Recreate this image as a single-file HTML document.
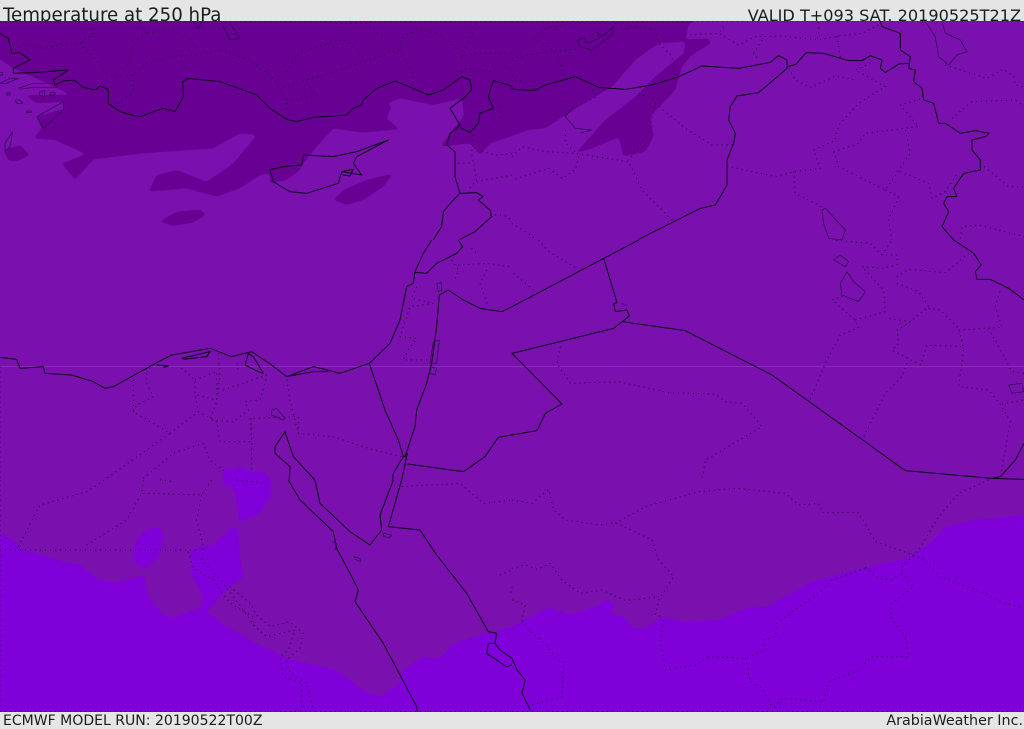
<!DOCTYPE html>
<html><head><meta charset="utf-8">
<style>
html,body{margin:0;padding:0;background:#e5e5e5}
body{position:relative;width:1024px;height:729px;overflow:hidden;font-family:"DejaVu Sans",sans-serif;color:#1c1c1c}
.t{position:absolute;white-space:nowrap;line-height:1}
svg{position:absolute;left:0;top:21px}
polyline{fill:none;stroke-linejoin:round;vector-effect:non-scaling-stroke}
.s polyline{stroke:#0c0418;stroke-width:1}
.l polyline{stroke:#2a0a4a;stroke-width:.7}
.d polyline{stroke:#14042a;stroke-width:1;stroke-dasharray:1 4}
</style></head><body>
<div class="t" style="left:3px;top:7px;font-size:18.2px">Temperature at 250 hPa</div>
<div class="t" style="right:3px;top:8px;font-size:16.13px">VALID T+093 SAT. 20190525T21Z</div>
<div class="t" style="left:3px;top:714px;font-size:14.04px">ECMWF MODEL RUN: 20190522T00Z</div>
<div class="t" style="right:1px;top:714px;font-size:14.3px">ArabiaWeather Inc.</div>
<svg width="1024" height="691" viewBox="0 21 1024 691">
<defs>
<filter id="sm" x="-5%" y="-5%" width="110%" height="110%" color-interpolation-filters="sRGB">
<feGaussianBlur stdDeviation="5"/>
<feComponentTransfer><feFuncA type="linear" slope="6" intercept="-2.5"/></feComponentTransfer>
</filter>
</defs>
<rect x="0" y="21" width="1024" height="691" fill="#7a11ae"/>
<g transform="scale(.33333)">
<g filter="url(#sm)" fill="#690094">
<polygon points="-40,10 2092,10 2081,63 2066,75 2056,118 2126,115 2133,130 2076,165 2046,200 2026,270 1951,350 1961,410 1936,455 1871,470 1856,412 1776,445 1726,460 1816,360 1906,290 1966,230 2051,160 2056,125 1976,130 1906,180 1836,260 1736,320 1636,385 1586,390 1536,408 1470,430 1440,465 1410,430 1320,440 1370,375 1392,345 1385,295 1300,315 1200,295 1160,310 1175,320 1160,355 1200,388 1085,398 1000,385 950,440 910,490 900,510 860,540 810,550 808,520 780,525 720,565 650,590 560,565 445,575 470,525 530,510 620,545 700,490 770,405 720,400 640,445 430,460 280,478 225,540 185,490 258,462 165,420 100,415 125,385 110,350 195,325 190,305 110,310 75,285 215,285 130,245 40,205 0,178 -40,160"/>
<polygon points="10,450 60,435 90,465 50,485 25,482"/>
<polygon points="1000,600 1030,570 1100,540 1180,520 1150,560 1090,600 1040,615"/>
<polygon points="478,665 530,635 600,628 618,645 580,668 520,678"/>
</g>
</g>
<g transform="translate(512,240) scale(.33333)">
<polygon fill="#690094" points="325,187 345,193 345,200 328,193"/>
</g>
<g transform="translate(0,480) scale(.33333)">
<g filter="url(#sm)" fill="#7f00d8">
<polygon points="670,-40 690,-30 720,-40 750,-25 790,-25 812,-5 812,50 780,100 718,127 705,30 670,15"/>
<polygon points="400,200 430,155 470,140 490,155 480,230 430,268 400,240"/>
<polygon points="-40,145 0,160 40,180 60,205 130,225 190,245 240,255 300,300 350,307 430,285 445,350 490,405 520,412 600,385 610,350 575,285 570,215 600,200 640,195 700,140 715,150 720,230 730,290 690,320 620,395 680,440 770,490 860,535 1010,570 1090,630 1140,650 1200,610 1205,575 1270,530 1320,535 1360,490 1480,455 1536,440 1646,382 1711,403 1786,380 1821,358 1846,375 1828,397 1871,410 1896,443 1936,445 1986,410 2046,425 2156,420 2236,385 2306,378 2436,305 2596,263 2726,232 2796,185 2836,140 2936,118 3072,105 3120,95 3120,760 -40,760"/>
</g>
</g>
<rect x="0" y="366" width="1024" height="1" fill="#8a2cb8"/>

<!-- tile 1 -->
<g transform="scale(.33333)">
<g class="d">
<polyline points="275,70 280,100 240,130 200,130 130,145 70,130 40,160"/>
<polyline points="240,130 280,170 320,220 350,230 400,225 440,190 510,170 590,165 665,150 750,180 820,235 840,265 860,300 865,345 860,358"/>
<polyline points="420,80 440,98 510,92 570,115 600,155"/>
<polyline points="440,100 400,125 385,190 370,220"/>
<polyline points="400,225 400,275 355,310"/>
<polyline points="860,215 900,155 1030,118 1080,160 1095,185 1000,215 920,240 840,265"/>
<polyline points="1095,185 1150,165 1200,150 1205,115 1250,90 1315,100 1375,150 1385,170 1430,160 1536,160"/>
<polyline points="1145,110 1100,70 1000,70"/>
<polyline points="1200,150 1240,225 1240,250"/>
<polyline points="1385,170 1430,70"/>
<polyline points="1370,225 1400,205 1475,215"/>
<polyline points="1515,200 1536,215"/>
<polyline points="920,250 950,285 880,300 860,300"/>
<polyline points="1420,405 1415,460 1430,540 1405,570"/>
<polyline points="1375,490 1420,488"/>
<polyline points="1445,455 1490,465 1536,460"/>
<polyline points="1430,545 1536,525"/>
<polyline points="1470,645 1510,645 1536,660"/>
<polyline points="1500,320 1505,355"/>
<polyline points="0,63 1536,63"/>
</g>
<g class="s">
<polyline points="0,100 25,115 35,160 60,158 90,180 40,205 40,220 100,218 205,210 160,240 165,255 190,243 222,240 250,262 285,270 300,258 325,268 325,310 360,335 395,345 420,350 490,325 525,335 550,290 548,245 565,235 660,245 770,285 810,325 860,358 890,365 940,352 1040,345 1060,325 1085,315 1090,300 1130,265 1185,243 1220,257 1285,285 1330,270 1385,230 1410,240 1415,270 1390,295 1350,325 1380,375 1370,385 1350,400 1340,435 1365,455 1365,530 1380,580 1430,578 1450,590 1435,600 1470,630 1475,650 1425,695 1380,718"/>
<polyline points="1380,382 1410,398 1435,370 1440,340 1480,325 1465,290 1480,242 1536,258 1536,268"/>
<polyline points="1380,580 1355,605 1330,635 1325,680 1300,720"/>
<polyline points="810,510 820,545 870,575 920,580 1015,550 1025,515 1085,525 1060,490 1070,470 1165,420 1070,455 1000,470 912,465 905,495 850,500 810,510"/>
<polyline points="1025,515 1060,508 1050,528 1028,525"/>
</g>
<g class="l">
<polyline points="665,70 690,120 720,115 690,70"/>
<polyline points="580,63 595,85 605,65"/>
<polyline points="110,350 190,305 190,330 130,385 110,350"/>
<polyline points="38,395 15,430 15,455 30,440 38,395"/>
<polyline points="0,250 30,235 55,235 20,250 0,250"/>
<polyline points="55,265 100,250 165,250 170,262 100,262 60,268"/>
<polyline points="118,275 135,272 132,290 118,285 118,275"/>
<polyline points="45,300 60,300 68,310 50,310 45,300"/>
<polyline points="80,333 95,333 95,338 80,338 80,333"/>
<polyline points="20,278 30,278 30,285 20,285 20,278"/>
<polyline points="150,278 165,278 165,285 150,285 150,278"/>
<polyline points="0,218 8,218 8,225 0,225"/>
</g>
</g>

<!-- tile 2 -->
<g transform="translate(512,0) scale(.33333)">
<g class="d">
<polyline points="520,105 620,100 680,135 730,110 810,108 920,120 975,108 1050,100 1100,75"/>
<polyline points="625,95 640,70"/>
<polyline points="975,108 985,170"/>
<polyline points="920,100 920,65"/>
<polyline points="750,120 725,160 740,180"/>
<polyline points="0,175 130,150 160,235"/>
<polyline points="0,225 70,270"/>
<polyline points="65,115 100,85 180,70 310,70"/>
<polyline points="65,115 95,135 135,155 200,145"/>
<polyline points="310,70 430,90 440,130 480,170 490,225"/>
<polyline points="240,270 255,290 180,325"/>
<polyline points="380,280 430,300 410,400 350,480"/>
<polyline points="430,310 520,385 600,435 665,435"/>
<polyline points="0,470 30,440 100,455 190,460 350,485 390,570 485,665"/>
<polyline points="200,470 190,510 150,535 110,505 0,540"/>
<polyline points="160,390 160,430 190,455"/>
<polyline points="645,498 790,530 845,515 925,505 905,450 970,420 980,375 1040,310 1120,260 1030,210 1085,185"/>
<polyline points="830,205 850,240 895,262 970,228 1030,240"/>
<polyline points="845,515 850,580 910,610 935,625"/>
<polyline points="965,455 1040,430 1060,400 1220,380 1165,315 1230,295"/>
<polyline points="1180,390 1195,460 1120,570 980,500 965,455"/>
<polyline points="1165,515 1250,550 1260,595 1300,575 1340,515"/>
<polyline points="1120,570 1160,590 1130,660 1140,720"/>
<polyline points="1320,355 1380,305 1510,300 1536,320"/>
<polyline points="1405,490 1490,560 1536,560"/>
<polyline points="1300,195 1425,235 1475,208 1505,230 1510,255 1536,260"/>
<polyline points="0,670 70,715"/>
<polyline points="1345,715 1350,680 1400,675 1536,710"/>
<polyline points="0,63 1536,63"/>
</g>
<g class="s">
<polyline points="0,268 65,272 100,255 190,230 260,262 340,268 420,255 500,230 570,198 680,205 775,187 800,167 825,180 825,205"/>
<polyline points="825,200 852,193 882,158 935,160 1010,182 1050,182 1075,167 1110,180 1105,205 1120,218 1160,192 1190,190"/>
<polyline points="1105,63 1110,80 1165,100 1165,150 1195,170 1190,205 1210,210 1205,245 1230,265 1235,300 1265,310 1280,370 1300,370 1345,400 1390,392 1432,400 1420,410 1380,420 1380,450 1405,480 1405,510 1355,520 1325,565 1335,590 1305,590 1295,610 1310,635 1290,680 1325,720"/>
<polyline points="825,205 740,278 675,288 655,320 650,360 670,400 665,430 645,480 645,555 610,615 565,625 380,718"/>
</g>
<g class="l">
<polyline points="195,120 215,115 225,130 260,115 255,95 270,110 305,80 300,105 240,150 205,140 195,120"/>
<polyline points="1240,65 1270,110 1280,170 1310,195 1335,165 1365,155 1345,120 1300,100 1290,65"/>
<polyline points="930,630 940,625 1000,690 990,720 950,715 935,670 930,630"/>
<polyline points="185,320 160,350 190,385 240,390 205,400"/>
</g>
</g>

<!-- tile 3 -->
<g transform="translate(0,240) scale(.33333)">
<g class="d">
<polyline points="0,380 0,720"/>
<polyline points="400,420 400,515 510,580 320,715"/>
<polyline points="510,580 595,515 585,465 585,420 540,380"/>
<polyline points="440,385 440,430 460,470 410,495 400,515"/>
<polyline points="585,420 650,395 650,480 590,465"/>
<polyline points="655,340 660,400 650,485 630,540 700,545 745,510 735,485 780,480 800,410"/>
<polyline points="670,450 730,430 800,405"/>
<polyline points="595,515 650,545 660,605 755,605 750,535 895,530 895,580 870,480 860,415"/>
<polyline points="755,535 755,690"/>
<polyline points="895,580 1000,590 1120,630 1205,650"/>
<polyline points="430,715 520,640 610,610 630,660 680,700"/>
<polyline points="710,370 715,395"/>
<polyline points="1250,140 1235,175 1300,190 1230,200 1200,290 1250,295 1225,330 1210,360 1290,360"/>
<polyline points="1355,60 1375,90 1365,120"/>
<polyline points="1375,75 1460,70 1530,80"/>
<polyline points="1460,90 1440,130 1465,200"/>
<polyline points="1415,25 1430,40"/>
</g>
<g class="s">
<polyline points="1295,0 1270,40 1245,95 1240,130 1220,140 1200,240 1170,310 1108,370 1020,400 990,392 940,380 860,410 815,375 755,335 695,350 630,325 515,345 470,368 340,440 315,445 280,425 215,405 135,400 130,380 60,385 50,358 0,352"/>
<polyline points="1245,97 1280,100 1310,70 1370,40 1388,20 1375,0"/>
<polyline points="1318,165 1310,260 1295,370 1290,390 1280,430 1250,510 1245,560 1215,650 1210,650"/>
<polyline points="1108,370 1155,510 1195,600 1210,650"/>
<polyline points="1222,640 1205,720"/>
<polyline points="1210,650 1180,700 1178,720"/>
<polyline points="1318,165 1345,150 1390,180 1440,205 1505,215 1536,200"/>
<polyline points="1536,585 1495,592 1455,650 1390,695 1222,672"/>
<polyline points="855,575 825,620 825,640 870,680 868,720"/>
<polyline points="855,575 880,650 945,720"/>
<polyline points="735,375 745,340 760,350 790,400 775,395 735,375"/>
<polyline points="860,410 940,395 985,395"/>
<polyline points="545,355 630,335 620,350 550,358"/>
<polyline points="470,375 505,378 490,382"/>
</g>
<g class="l">
<polyline points="1300,305 1318,300 1310,370 1290,370 1300,305"/>
<polyline points="1290,380 1310,385 1305,405 1288,398 1290,380"/>
<polyline points="1310,130 1325,128 1325,150 1315,155 1310,130"/>
<polyline points="815,510 830,505 855,535 850,540 815,525 815,510"/>
</g>
</g>

<!-- tile 4 -->
<g transform="translate(512,240) scale(.33333)">
<g class="d">
<polyline points="80,0 110,35 200,88"/>
<polyline points="5,100 70,155"/>
<polyline points="145,320 135,370 175,430 320,425 470,458 610,462 640,485 690,490 750,560 580,660 570,720"/>
<polyline points="895,478 940,370 985,285 1040,262 1030,240 960,180 1000,165"/>
<polyline points="1030,240 1120,215 1115,150 1050,80 1110,85 1155,75 1155,45 1110,45 1075,10 960,0"/>
<polyline points="1110,45 1140,0"/>
<polyline points="1155,110 1190,88 1300,98 1370,40"/>
<polyline points="1155,130 1220,155 1250,200 1195,245 1125,235"/>
<polyline points="1250,205 1285,210 1340,265 1355,330 1340,440 1430,450 1470,500 1495,545 1465,710"/>
<polyline points="1195,245 1155,270 1160,310 1140,330 1225,375 1245,315 1350,320"/>
<polyline points="1185,370 1170,410 1120,460 1050,600"/>
<polyline points="1340,270 1470,262 1450,200 1465,150"/>
<polyline points="1430,265 1500,395 1536,400"/>
<polyline points="1470,492 1536,480"/>
</g>
<g class="s">
<polyline points="380,0 0,200"/>
<polyline points="275,55 315,188 305,190 310,215 345,210 352,228 305,265 0,340 150,492 100,520 75,572 0,585"/>
<polyline points="330,245 520,272 780,405 1180,692 1440,715 1536,718"/>
<polyline points="1440,715 1465,710 1510,660 1536,610"/>
<polyline points="1325,0 1385,40 1408,75 1390,95 1395,118 1435,118 1490,145 1536,180"/>
</g>
<g class="l">
<polyline points="965,60 985,45 1010,65 1000,80 965,60"/>
<polyline points="1005,95 985,130 990,165 1040,185 1060,155 1025,125 1005,95"/>
<polyline points="1490,435 1530,430 1535,455 1500,460 1490,435"/>
</g>
</g>

<!-- tile 5 -->
<g transform="translate(0,480) scale(.33333)">
<g class="d">
<polyline points="0,0 0,690"/>
<polyline points="0,210 600,210"/>
<polyline points="55,200 120,75 260,35 315,0"/>
<polyline points="260,195 380,120 425,40 430,0"/>
<polyline points="430,40 605,45 635,0"/>
<polyline points="605,45 590,120 610,200 605,240 670,310 730,390 765,440 800,470 885,450 865,510 840,530 850,590 905,610 905,690"/>
<polyline points="565,215 580,265 640,300 690,370 760,410"/>
<polyline points="690,320 750,370 770,405 810,440 870,425 910,460 900,505 860,540 870,580 920,610 940,690"/>
<polyline points="480,0 520,5"/>
<polyline points="710,0 800,10"/>
<polyline points="1205,20 1380,10 1450,70 1536,60"/>
<polyline points="1500,285 1536,270"/>
<polyline points="1536,320 1530,350"/>
<polyline points="0,695 1536,695"/>
</g>
<g class="s">
<polyline points="865,0 900,60 1000,155 1010,205 1050,280 1075,330 1065,365 1150,490 1250,680 1252,695"/>
<polyline points="945,0 960,70 1050,155 1110,195 1145,150 1140,105 1180,0"/>
<polyline points="1205,0 1165,140 1260,150 1310,225 1400,340 1465,455 1490,460 1485,490 1500,510 1536,535"/>
<polyline points="1485,490 1465,490 1460,520 1520,560 1536,555"/>
</g>
<g class="l">
<polyline points="1150,160 1175,165 1170,172 1150,170 1150,160"/>
<polyline points="1062,230 1080,235 1082,245 1065,238 1062,230"/>
<polyline points="995,185 1010,190 1005,210"/>
</g>
</g>

<!-- tile 6 -->
<g transform="translate(512,480) scale(.33333)">
<g class="d">
<polyline points="0,60 60,70 110,28 125,90 160,120 260,135 310,128 420,180 440,240 485,290 440,360 430,405 450,410"/>
<polyline points="310,130 400,80 560,35 670,25 820,40 860,75 920,70 930,98 1040,98 1090,185 1190,220 1240,240 1280,290 1420,340 1480,372 1536,380"/>
<polyline points="1430,0 1340,40 1280,110 1220,210 1170,260 1170,280"/>
<polyline points="1170,280 1205,320 1135,375 1140,420 1180,470 1190,530 1080,530 1040,570 950,605 935,665 810,655 780,690"/>
<polyline points="1060,262 1100,295 1140,300 1170,280"/>
<polyline points="1060,265 960,300 920,340 840,395 795,430 790,470 755,480 760,510 700,535 590,530 550,555 460,570 445,480 455,415"/>
<polyline points="700,535 715,605 750,625 780,680"/>
<polyline points="0,265 40,255 75,268 115,250 150,300 205,340 270,330 340,362 430,352"/>
<polyline points="0,360 40,375 30,420 50,450 100,490 135,540 155,545 150,650 60,675"/>
<polyline points="0,695 1536,695"/>
</g>
<g class="s">
<polyline points="0,535 15,570 40,600 30,640 55,690"/>
</g>
</g>
</svg>
</body></html>
